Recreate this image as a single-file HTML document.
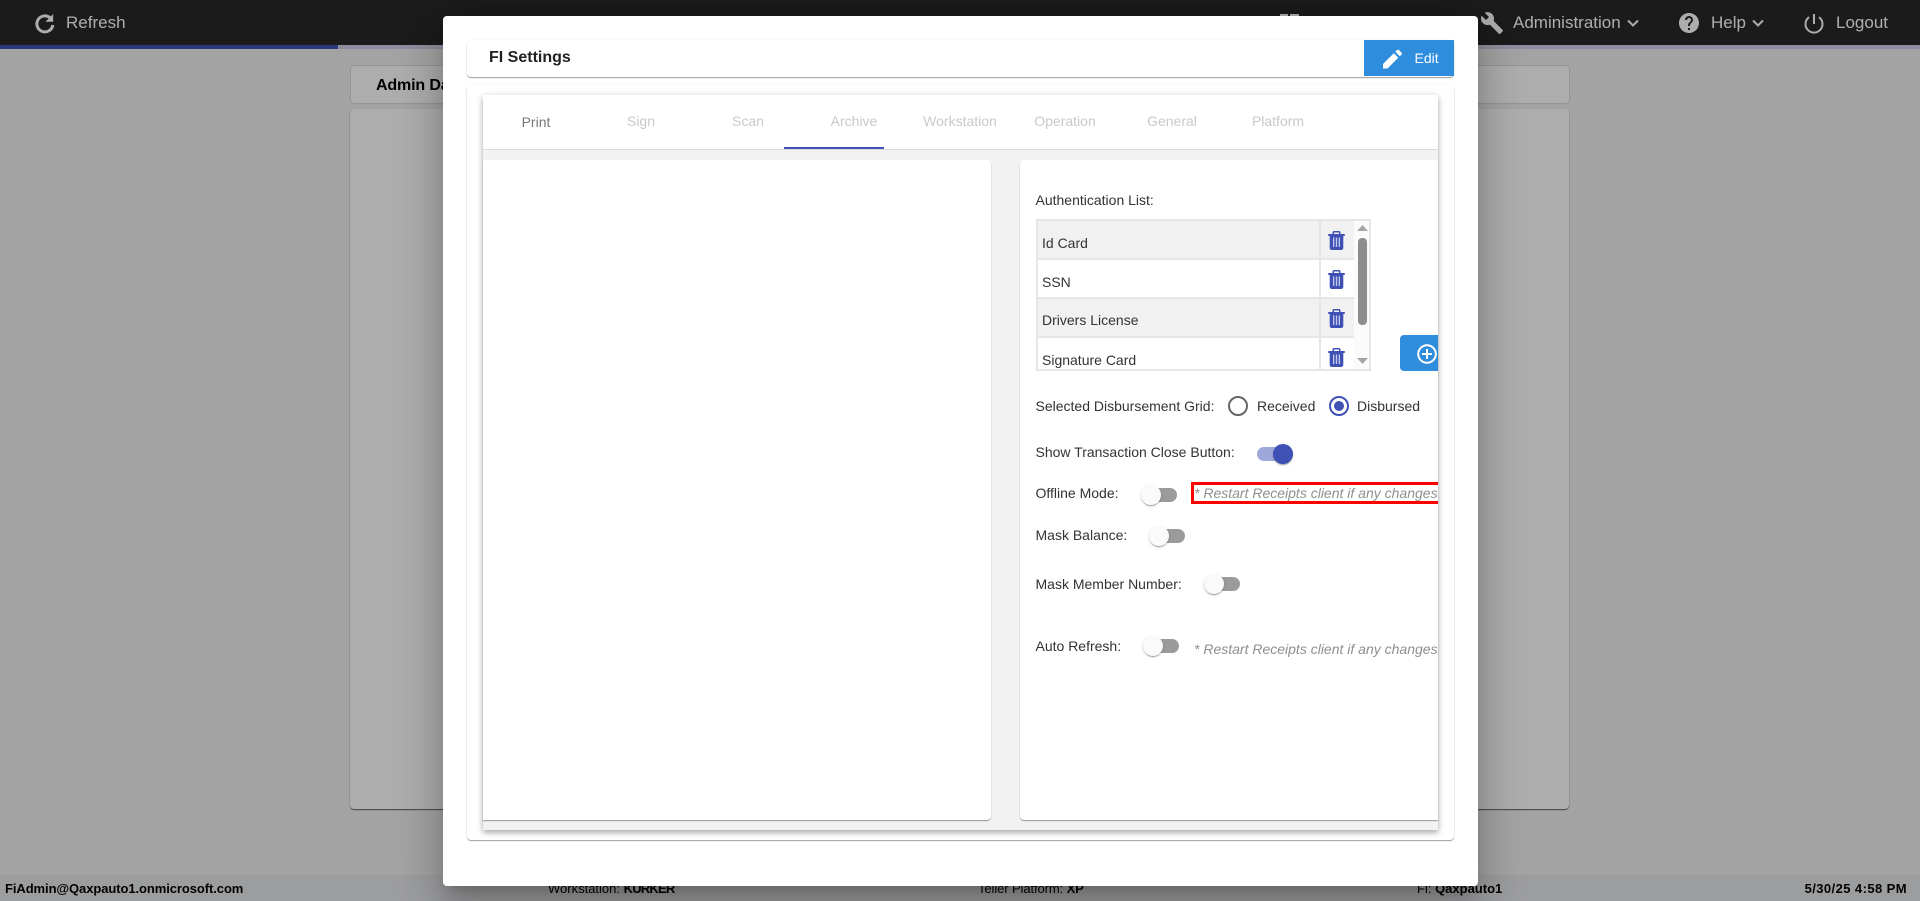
<!DOCTYPE html>
<html lang="en"><head><meta charset="utf-8"><title>FI Settings</title>
<style>
html,body{margin:0;padding:0;width:1920px;height:901px;overflow:hidden;background:#f0f0f0;font-family:"Liberation Sans",Arial,sans-serif;}
.a{position:absolute;white-space:nowrap;}
.t{position:absolute;white-space:nowrap;line-height:20px;height:20px;}
.hd{color:#fff;font-size:17px;top:13px;}
svg{position:absolute;display:block;}
.tab{position:absolute;top:111px;width:106px;text-align:center;font-size:14px;line-height:20px;color:#c9c9c9;}
.lbl{position:absolute;left:1035.5px;font-size:14px;line-height:20px;color:#333;white-space:nowrap;}
.row{position:absolute;left:1038px;width:316px;height:38px;border-bottom:2px solid #e4e6e9;}
.row i{position:absolute;left:281px;top:0;bottom:-2px;width:2px;background:#e4e6e9;}
.row span{position:absolute;left:4px;top:12px;font-size:14px;line-height:20px;color:#333;}
.track{position:absolute;width:36px;height:14px;border-radius:7px;background:#9b9b9b;}
.thumb{position:absolute;width:20px;height:20px;border-radius:50%;background:#fafafa;box-shadow:0 2px 1px -1px rgba(0,0,0,.2),0 1px 1px 0 rgba(0,0,0,.14),0 1px 3px 0 rgba(0,0,0,.12);}
.note{position:absolute;font-size:14px;line-height:20px;font-style:italic;color:#8f8f8f;white-space:nowrap;}
.ft{position:absolute;top:880px;font-size:13px;line-height:18px;color:#000;white-space:nowrap;}
.ft b{font-weight:700;}
</style></head>
<body>
<!-- underlying page -->
<div class="a" style="left:0;top:0;width:1920px;height:45px;background:#292929"></div>
<div class="a" style="left:0;top:45px;width:1920px;height:4px;background:#d0d2e8"></div>
<div class="a" style="left:0;top:45px;width:338px;height:4px;background:#3f51b5"></div>
<svg style="left:34px;top:12px" width="22" height="22" viewBox="0 0 22 22" fill="none"><path d="M16.500 6.200A8 8 0 1 0 18.800 13" stroke="#fff" stroke-width="3"/><path d="M19.200 2v7.800h-7.800z" fill="#fff"/></svg>
<div class="t hd" style="left:66px">Refresh</div>
<div class="a" style="left:1280px;top:14px;width:8px;height:2px;background:#fff"></div>
<div class="a" style="left:1290px;top:14px;width:9px;height:2px;background:#fff"></div>
<svg style="left:1480px;top:11px" width="24" height="24" viewBox="0 0 24 24" fill="#fff"><path d="M22.700 19l-9.100-9.100c.9-2.300.4-5-1.500-6.900-2-2-5-2.400-7.400-1.300L9 6 6 9 1.600 4.700C.4 7.100.9 10.100 2.900 12.100c1.900 1.900 4.600 2.400 6.900 1.500l9.100 9.100c.4.4 1 .4 1.400 0l2.300-2.300c.5-.4.5-1.100.1-1.400z"/></svg>
<div class="t hd" style="left:1513px">Administration</div>
<svg style="left:1627px;top:19px" width="12" height="9" viewBox="0 0 12 9" fill="none" stroke="#fff" stroke-width="2"><path d="M1 1.500l5 5 5-5"/></svg>
<svg style="left:1677px;top:11px" width="24" height="24" viewBox="0 0 24 24" fill="#fff"><path d="M12 2C6.480 2 2 6.480 2 12s4.480 10 10 10 10-4.480 10-10S17.520 2 12 2zm1 17h-2v-2h2v2zm2.070-7.750l-.9.920C13.450 12.900 13 13.500 13 15h-2v-.5c0-1.100.45-2.100 1.170-2.830l1.240-1.260c.37-.36.59-.86.59-1.410 0-1.100-.9-2-2-2s-2 .9-2 2H8c0-2.210 1.790-4 4-4s4 1.790 4 4c0 .88-.36 1.680-.93 2.250z"/></svg>
<div class="t hd" style="left:1711px">Help</div>
<svg style="left:1752px;top:19px" width="12" height="9" viewBox="0 0 12 9" fill="none" stroke="#fff" stroke-width="2"><path d="M1 1.500l5 5 5-5"/></svg>
<svg style="left:1802px;top:11px" width="24" height="24" viewBox="0 0 24 24" fill="none" stroke="#fff" stroke-width="2"><path d="M12 3v10"/><path d="M7 6.200a8.500 8.500 0 1 0 10 0"/></svg>
<div class="t hd" style="left:1836px">Logout</div>

<div class="a" style="left:350px;top:65px;width:1218px;height:37px;background:#fff;border:1px solid #dcdcdc;border-radius:4px"></div>
<div class="t" style="left:376px;top:76px;font-size:16px;font-weight:700;color:#000;letter-spacing:-.15px">Admin Dashboard</div>
<div class="a" style="left:350px;top:109px;width:1219px;height:700px;background:#fff;border-radius:4px;box-shadow:0 1px 1px rgba(0,0,0,.6)"></div>
<div class="a" style="left:0;top:875px;width:1920px;height:26px;background:#e6e8ea"></div>
<div class="ft" style="left:5px;letter-spacing:-.08px"><b>FiAdmin@Qaxpauto1.onmicrosoft.com</b></div>
<div class="ft" style="left:548px">Workstation: <b style="letter-spacing:-.8px">KURKER</b></div>
<div class="ft" style="left:978px;letter-spacing:-.1px">Teller Platform: <b>XP</b></div>
<div class="ft" style="left:1417px">Fi: <b>Qaxpauto1</b></div>
<div class="ft" style="right:13px;letter-spacing:.42px"><b>5/30/25 4:58 PM</b></div>

<!-- backdrop -->
<div class="a" style="left:0;top:0;width:1920px;height:901px;background:rgba(0,0,0,.32)"></div>

<!-- modal -->
<div class="a" style="left:443px;top:16px;width:1035px;height:870px;background:#fff;border-radius:4px;box-shadow:0 11px 15px -7px rgba(0,0,0,.2),0 24px 38px 3px rgba(0,0,0,.14),0 9px 46px 8px rgba(0,0,0,.12)"></div>
<div class="a" style="left:467px;top:40px;width:987px;height:37px;background:#fff;border-radius:4px;box-shadow:0 1px 1px rgba(0,0,0,.38),0 0 2px rgba(0,0,0,.06)"></div>
<div class="t" style="left:489px;top:48px;font-size:16px;font-weight:700;color:#222">FI Settings</div>
<div class="a" style="left:1364px;top:40px;width:90px;height:36px;background:#2f8ddd"></div>
<svg style="left:1383px;top:49px" width="20" height="20" viewBox="0 0 20 20" fill="#fff"><path d="M0 15v4.500h4.500L15.300 8.700l-4.500-4.500z"/><path d="M12.300 2.800l4.500 4.500 1.800-1.800c.5-.5.5-1.300 0-1.800L15.900 1c-.5-.5-1.300-.5-1.800 0z"/></svg>
<div class="t" style="left:1414.500px;top:48px;font-size:14px;color:#fff">Edit</div>

<div class="a" style="left:467px;top:85px;width:987px;height:755px;background:#fff;border-radius:4px;box-shadow:0 1px 1px rgba(0,0,0,.38),0 0 2px rgba(0,0,0,.06)"></div>
<!-- panel -->
<div class="a" style="left:483px;top:95px;width:955px;height:735px;background:#f2f2f2;box-shadow:0 3px 5px rgba(0,0,0,.25),0 1px 8px rgba(0,0,0,.13)"></div>
<div class="a" style="left:483px;top:95px;width:955px;height:54px;background:#fff;border-bottom:1px solid #dcdcdc"></div>
<div class="tab" style="left:483px;color:#777;top:112px">Print</div>
<div class="tab" style="left:588px">Sign</div>
<div class="tab" style="left:695px">Scan</div>
<div class="tab" style="left:801px">Archive</div>
<div class="tab" style="left:907px">Workstation</div>
<div class="tab" style="left:1012px">Operation</div>
<div class="tab" style="left:1119px">General</div>
<div class="tab" style="left:1225px">Platform</div>
<div class="a" style="left:784px;top:147px;width:100px;height:2px;background:#3f51b5"></div>

<div class="a" style="left:483px;top:160px;width:507.500px;height:660px;background:#fff;border-radius:0 4px 4px 0;box-shadow:0 1px 1px rgba(0,0,0,.38)"></div>
<div class="a" style="left:1020px;top:160px;width:418px;height:660px;background:#fff;border-radius:4px 0 0 4px;box-shadow:0 1px 1px rgba(0,0,0,.38);overflow:hidden"></div>

<div class="lbl" style="top:190px">Authentication List:</div>
<div class="a" style="left:1036px;top:219px;width:331px;height:148px;border:2px solid #e4e6e9;background:#fff;overflow:hidden"></div>
<div class="row" style="top:221px;background:#f1f1f1;height:37px"><i></i><span>Id Card</span></div>
<div class="row" style="top:260px;background:#fff;height:37px"><i></i><span>SSN</span></div>
<div class="row" style="top:299px;background:#f1f1f1;height:37px"><i></i><span style="top:11px">Drivers License</span></div>
<div class="a" style="left:1038px;top:338px;width:316px;height:31px;background:#fff;overflow:hidden"><i style="position:absolute;left:281px;top:0;bottom:0;width:2px;background:#e4e6e9"></i><span style="position:absolute;left:4px;top:12px;font-size:14px;line-height:20px;color:#333">Signature Card</span></div>
<div class="a" style="left:1354px;top:221px;width:15px;height:148px;background:#fbfbfb"></div>
<div class="a" style="left:1358px;top:238px;width:9px;height:87px;background:#8d8d8d;border-radius:4px"></div>
<svg style="left:1357px;top:225px" width="11" height="6" viewBox="0 0 11 6" fill="#a5a5a5"><path d="M5.500 0L11 6H0z"/></svg>
<svg style="left:1357px;top:358px" width="11" height="6" viewBox="0 0 11 6" fill="#a5a5a5"><path d="M0 0h11L5.500 6z"/></svg>
<svg style="left:1328px;top:231px" width="17" height="19" viewBox="0 0 17 19" fill="#3f51b5"><path fill-rule="evenodd" d="M4.500 3V1.500C4.500.7 5.200 0 6 0h5c.8 0 1.500.7 1.500 1.500V3H16c.6 0 1 .4 1 1s-.4 1-1 1h-.7v12c0 1.100-.9 2-2 2H3.700c-1.100 0-2-.9-2-2V5H1C.4 5 0 4.600 0 4s.4-1 1-1zM6 3h5V1.500H6z"/><path d="M5 6.500h1.300V16H5zM7.850 6.500h1.300V16h-1.300zM10.700 6.500H12V16h-1.300z" fill="#c5cae9"/></svg>
<svg style="left:1328px;top:270px" width="17" height="19" viewBox="0 0 17 19" fill="#3f51b5"><path fill-rule="evenodd" d="M4.500 3V1.500C4.500.7 5.200 0 6 0h5c.8 0 1.500.7 1.500 1.500V3H16c.6 0 1 .4 1 1s-.4 1-1 1h-.7v12c0 1.100-.9 2-2 2H3.700c-1.100 0-2-.9-2-2V5H1C.4 5 0 4.600 0 4s.4-1 1-1zM6 3h5V1.500H6z"/><path d="M5 6.500h1.300V16H5zM7.850 6.500h1.300V16h-1.300zM10.700 6.500H12V16h-1.300z" fill="#c5cae9"/></svg>
<svg style="left:1328px;top:309px" width="17" height="19" viewBox="0 0 17 19" fill="#3f51b5"><path fill-rule="evenodd" d="M4.500 3V1.500C4.500.7 5.200 0 6 0h5c.8 0 1.500.7 1.500 1.500V3H16c.6 0 1 .4 1 1s-.4 1-1 1h-.7v12c0 1.100-.9 2-2 2H3.700c-1.100 0-2-.9-2-2V5H1C.4 5 0 4.600 0 4s.4-1 1-1zM6 3h5V1.500H6z"/><path d="M5 6.500h1.300V16H5zM7.850 6.500h1.300V16h-1.300zM10.700 6.500H12V16h-1.300z" fill="#c5cae9"/></svg>
<svg style="left:1328px;top:348px" width="17" height="19" viewBox="0 0 17 19" fill="#3f51b5"><path fill-rule="evenodd" d="M4.500 3V1.500C4.500.7 5.200 0 6 0h5c.8 0 1.500.7 1.500 1.500V3H16c.6 0 1 .4 1 1s-.4 1-1 1h-.7v12c0 1.100-.9 2-2 2H3.700c-1.100 0-2-.9-2-2V5H1C.4 5 0 4.600 0 4s.4-1 1-1zM6 3h5V1.500H6z"/><path d="M5 6.500h1.300V16H5zM7.850 6.500h1.300V16h-1.300zM10.700 6.500H12V16h-1.300z" fill="#c5cae9"/></svg>

<div class="a" style="left:1400px;top:335px;width:38px;height:36px;background:#2f8ddd;border-radius:4px 0 0 4px;overflow:hidden">
<svg style="left:17px;top:9px" width="20" height="20" viewBox="0 0 20 20" fill="none" stroke="#fff" stroke-width="2"><circle cx="10" cy="10" r="8.800"/><path d="M10 5v10M5 10h10"/></svg></div>

<div class="lbl" style="top:396px">Selected Disbursement Grid:</div>
<div class="a" style="left:1228px;top:396px;width:16px;height:16px;border:2px solid #666;border-radius:50%"></div>
<div class="lbl" style="left:1257px;top:396px">Received</div>
<div class="a" style="left:1329px;top:396px;width:16px;height:16px;border:2px solid #3f51b5;border-radius:50%"></div>
<div class="a" style="left:1334px;top:401px;width:10px;height:10px;background:#3f51b5;border-radius:50%"></div>
<div class="lbl" style="left:1357px;top:396px">Disbursed</div>

<div class="lbl" style="top:442px">Show Transaction Close Button:</div>
<div class="track" style="left:1257px;top:447px;background:#9fa8da"></div>
<div class="thumb" style="left:1273px;top:444px;background:#3f51b5"></div>

<div class="lbl" style="top:483px">Offline Mode:</div>
<div class="track" style="left:1141px;top:488px"></div>
<div class="thumb" style="left:1141px;top:485px"></div>
<div class="a" style="left:1191px;top:482px;width:247px;height:22px;box-sizing:border-box;border:3px solid #f00;border-right:0;overflow:hidden"></div>
<div class="note" style="left:1194px;top:483px;width:244px;overflow:hidden">* Restart Receipts client if any changes</div>

<div class="lbl" style="top:525px">Mask Balance:</div>
<div class="track" style="left:1149px;top:529px"></div>
<div class="thumb" style="left:1149px;top:526px"></div>

<div class="lbl" style="top:574px">Mask Member Number:</div>
<div class="track" style="left:1204px;top:577px"></div>
<div class="thumb" style="left:1204px;top:574px"></div>

<div class="lbl" style="top:636px">Auto Refresh:</div>
<div class="track" style="left:1143px;top:639px"></div>
<div class="thumb" style="left:1143px;top:636px"></div>
<div class="note" style="left:1194px;top:639px;width:244px;overflow:hidden">* Restart Receipts client if any changes</div>
</body></html>
